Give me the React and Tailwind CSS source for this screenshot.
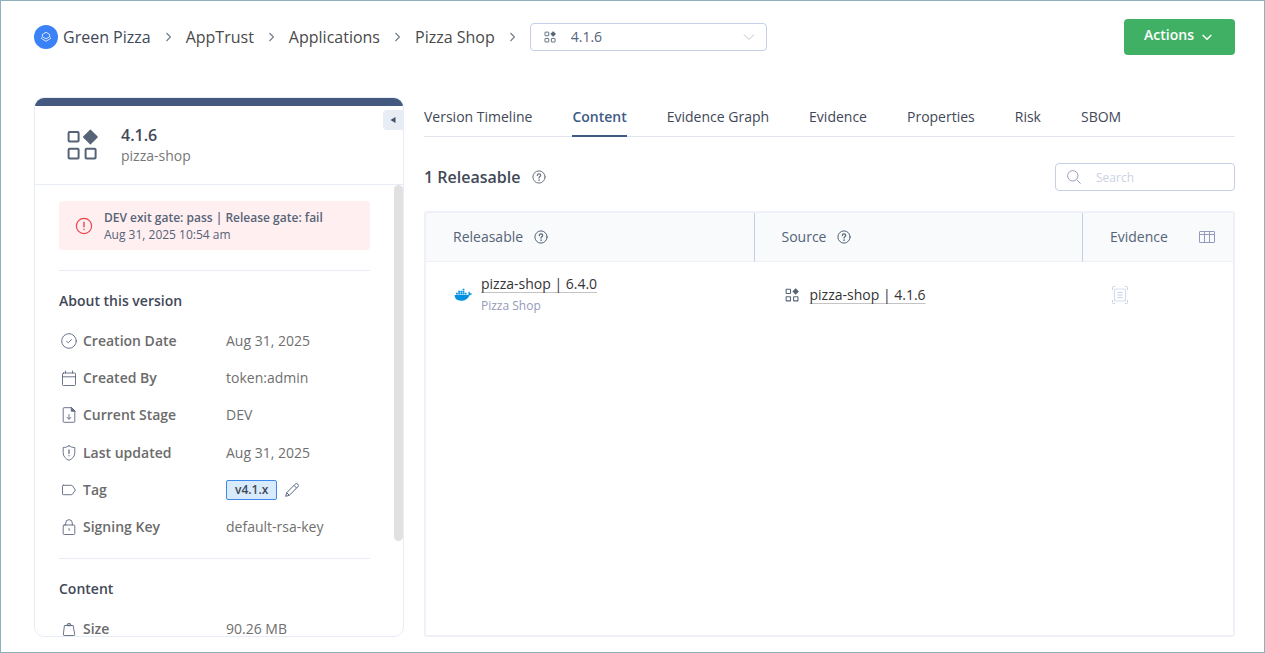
import React from "react";

function AppIcon({ className, stroke = 2 }) {
  return (
    <svg viewBox="0 0 32 32" className={className} fill="none" stroke="currentColor" strokeWidth={stroke} aria-hidden="true">
      <rect x="2.600" y="3" width="10" height="9.600" rx="1" />
      <rect x="2.600" y="19.800" width="10" height="9.600" rx="1" />
      <rect x="19.600" y="19.800" width="10" height="9.600" rx="1" />
      <path d="M24.400 1.200 31.200 8l-6.800 6.800L17.600 8z" fill="currentColor" strokeWidth="1.200" strokeLinejoin="round" />
    </svg>
  );
}

function Chevron() {
  return (
    <svg viewBox="0 0 5 10" className="h-[10px] w-[5px] shrink-0 text-[#707a8a]" fill="none" stroke="currentColor" strokeWidth="1.1" aria-hidden="true">
      <path d="M0.500 1 4.400 5 0.500 9" />
    </svg>
  );
}

function HelpIcon({ className }) {
  return (
    <svg viewBox="0 0 14 14" className={className} fill="none" stroke="currentColor" strokeWidth="1" strokeLinecap="round" aria-hidden="true">
      <circle cx="7" cy="7" r="6.100" />
      <path d="M5.300 5.600C5.300 4.500 6 3.900 7 3.900s1.700.6 1.700 1.500C8.700 6.500 7 6.700 7 8.100" strokeWidth="1.200" />
      <circle cx="7" cy="10.100" r="0.300" fill="currentColor" strokeWidth="0.800" />
    </svg>
  );
}

function RowIcon({ children }) {
  return (
    <svg viewBox="0 0 16 16" className="size-4 shrink-0 text-[#5b6780]" fill="none" stroke="currentColor" strokeWidth="0.900" strokeLinecap="round" strokeLinejoin="round" aria-hidden="true">
      {children}
    </svg>
  );
}

const icons = {
  check: (
    <RowIcon>
      <circle cx="8" cy="8" r="7.300" />
      <path d="m5.600 8.300 1.700 1.500 3.200-3.300" />
    </RowIcon>
  ),
  calendar: (
    <RowIcon>
      <rect x="1.500" y="3" width="13" height="12.500" rx="1" />
      <path d="M1.500 6.800h13M4.500 1v2M11.500 1v2" />
    </RowIcon>
  ),
  stage: (
    <RowIcon>
      <path d="M10.300.700H3a.8.8 0 0 0-.8.8v13a.8.8 0 0 0 .8.800h10a.8.8 0 0 0 .8-.8V4.200z" />
      <path d="M10.300.700v3.500h3.500z" fill="currentColor" />
      <path d="M8 7.500v4.500M6 10.300l2 2 2-2" />
    </RowIcon>
  ),
  shield: (
    <RowIcon>
      <path d="M8 .800c1.600 1.200 3.500 1.700 5.800 1.700v5c0 3.800-2.200 6.300-5.800 7.800-3.600-1.500-5.800-4-5.800-7.800v-5C4.500 2.500 6.400 2 8 .800z" />
      <path d="M8 4.800v3.700M8 10.600v.2" strokeWidth="1.200" />
    </RowIcon>
  ),
  tag: (
    <RowIcon>
      <path d="M2.300 3.300h8.300a1 1 0 0 1 .8.400L14.400 8l-3 4.300a1 1 0 0 1-.8.400H2.300a.8.8 0 0 1-.8-.8V4.100a.8.8 0 0 1 .8-.8z" />
    </RowIcon>
  ),
  lock: (
    <RowIcon>
      <rect x="2.200" y="6" width="11.600" height="9.500" rx="1" />
      <path d="M4.700 6V4a3.300 3.300 0 0 1 6.600 0v2M7.700 9.300l.5.500v1.600" />
    </RowIcon>
  ),
  weight: (
    <RowIcon>
      <path d="M3.800 4.500h8.400l1.500 8.900a.9.9 0 0 1-.9 1.100H3.200a.9.900 0 0 1-.9-1.100z" />
      <path d="M6 4.300a2 2 0 0 1 4 0z" fill="currentColor" fillOpacity="0.4" />
    </RowIcon>
  ),
};

function InfoRow({ icon, label, children }) {
  return (
    <div className="flex items-center">
      <dt className="flex w-[167px] shrink-0 items-center gap-1.5 pl-0.5 font-semibold text-[#6b6b6b]">
        {icons[icon]}
        {label}
      </dt>
      <dd className="flex items-center gap-2 text-[#6f6f6f]">{children}</dd>
    </div>
  );
}

const tabs = ["Version Timeline", "Content", "Evidence Graph", "Evidence", "Properties", "Risk", "SBOM"];
const crumbs = ["AppTrust", "Applications", "Pizza Shop"];

function Sidebar() {
  return (
    <aside className="relative flex w-[370px] shrink-0 flex-col overflow-hidden rounded-[10px] border border-[#e8edf5]">
      <div className="h-2 shrink-0 bg-[#43597f]" />
      <button aria-label="Collapse panel" className="absolute top-3 right-0 flex h-5 w-5 items-center justify-center rounded-l bg-[#e8edf5] text-[#43536b]">
        <svg viewBox="0 0 6 8" className="h-2 w-1.5" fill="currentColor" aria-hidden="true">
          <path d="M5.500 1v6L.500 4z" />
        </svg>
      </button>
      <div className="flex h-[79px] shrink-0 items-center gap-[23px] border-b border-[#e8edf5] pl-[31px]">
        <AppIcon className="size-8 text-[#556377]" />
        <div className="pt-0.5">
          <h1 className="text-base leading-5 font-semibold text-[#414857]">4.1.6</h1>
          <p className="leading-[22px] text-[#777777]">pizza-shop</p>
        </div>
      </div>
      <div className="min-h-0 flex-1 overflow-hidden pt-4 pr-[33px] pl-6">
        <div className="flex h-[49px] items-center gap-[11px] rounded bg-[#ffeff0] pl-4 text-[#556377]">
          <svg viewBox="0 0 18 18" className="size-[18px] shrink-0 text-[#ee4349]" fill="none" stroke="currentColor" strokeWidth="1.200" strokeLinecap="round" aria-hidden="true">
            <circle cx="9" cy="9" r="7.600" />
            <path d="M9 5.200v4.600M9 12.300v.2" strokeWidth="1.400" />
          </svg>
          <div className="text-xs leading-[17px]">
            <p className="font-semibold">DEV exit gate: pass | Release gate: fail</p>
            <p>Aug 31, 2025 10:54 am</p>
          </div>
        </div>
        <section className="mt-5 border-t border-[#e8edf5] pt-5 pb-3">
          <h2 className="mb-[11px] leading-5 font-semibold text-[#414857]">About this version</h2>
          <dl className="grid h-56 grid-rows-6">
            <InfoRow icon="check" label="Creation Date">Aug 31, 2025</InfoRow>
            <InfoRow icon="calendar" label="Created By">token:admin</InfoRow>
            <InfoRow icon="stage" label="Current Stage">DEV</InfoRow>
            <InfoRow icon="shield" label="Last updated">Aug 31, 2025</InfoRow>
            <InfoRow icon="tag" label="Tag">
              <span className="rounded-xs border border-[#3e8ae8] bg-[#d8ebfd] px-2 text-xs leading-[18px] font-semibold text-[#414857]">v4.1.x</span>
              <button aria-label="Edit tag" className="text-[#5b6780]">
                <svg viewBox="0 0 14 14" className="size-[14px]" fill="none" stroke="currentColor" strokeWidth="1" strokeLinejoin="round" aria-hidden="true">
                  <path d="M.700 13.300 1.700 9.700 10.200 1.200a1.500 1.500 0 0 1 2.600 2.600L4.300 12.300zM9 2.400 11.600 5M1.700 9.700l2.600 2.600" />
                </svg>
              </button>
            </InfoRow>
            <InfoRow icon="lock" label="Signing Key">default-rsa-key</InfoRow>
          </dl>
        </section>
        <section className="border-t border-[#e8edf5] pt-5">
          <h2 className="mb-[11px] leading-5 font-semibold text-[#414857]">Content</h2>
          <dl className="grid h-[37px]">
            <InfoRow icon="weight" label="Size">90.26 MB</InfoRow>
          </dl>
        </section>
      </div>
      <div className="absolute top-[87px] right-0 h-[356px] w-[9px] rounded-full bg-[#e1e1e1]" />
    </aside>
  );
}

function ContentTable() {
  return (
    <div className="mt-5 flex-1 rounded-[3px] border-2 border-[#f0f1f8]">
      <table className="w-full table-fixed border-separate border-spacing-0 text-left">
        <colgroup>
          <col />
          <col />
          <col className="w-[150px]" />
        </colgroup>
        <thead className="bg-[#f8fafc] text-[#556377]">
          <tr className="h-[49px]">
            <th className="border-r border-b border-r-[#c5cfe8] border-b-[#f0f1f8] pl-[27px] font-normal">
              <span className="flex items-center gap-[11px]">Releasable <HelpIcon className="size-[14px]" /></span>
            </th>
            <th className="border-r border-b border-r-[#c5cfe8] border-b-[#f0f1f8] pl-[27px] font-normal">
              <span className="flex items-center gap-[11px]">Source <HelpIcon className="size-[14px]" /></span>
            </th>
            <th className="border-b border-[#f0f1f8] pr-[18px] pl-[27px] font-normal">
              <span className="flex items-center justify-between">
                Evidence
                <button aria-label="Choose columns" className="text-[#9599bb]">
                  <svg viewBox="0 0 16 12" className="h-3 w-4" fill="none" stroke="currentColor" aria-hidden="true">
                    <rect x="0.500" y="0.500" width="15" height="11" rx="0.500" />
                    <path d="M.5 3.500h15M5.500.500v11M10.500.500v11" />
                  </svg>
                </button>
              </span>
            </th>
          </tr>
        </thead>
        <tbody>
          <tr className="h-[66px]">
            <td className="pl-7">
              <div className="flex items-center gap-[9px]">
                <svg viewBox="0 0 18 14" className="h-[14px] w-[18px] shrink-0" fill="#0091e2" aria-hidden="true">
                  <path d="M.700 7h12.600c.7 0 1.200-.2 1.500-.5-.6-1-.5-2.200.1-3 .9.500 1.300 1.200 1.400 2 .6-.1 1.200 0 1.700.3-.4 1-1.300 1.400-2.500 1.400-1.500 3.600-4.300 5.500-8.200 5.500C3.400 12.700.500 10.800.700 7z" />
                  <path d="M2 4.800h1.800v1.700H2zM4.200 4.800H6v1.700H4.200zM6.400 4.800h1.800v1.700H6.400zM8.600 4.800h1.800v1.700H8.600zM10.800 4.800h1.800v1.700h-1.800zM4.200 2.700H6v1.700H4.200zM6.400 2.700h1.800v1.700H6.400zM8.600 2.700h1.800v1.700H8.600zM8.600.700h1.800v1.600H8.600z" />
                </svg>
                <div>
                  <a href="#releasable" className="block leading-[22px] text-[#333333] underline decoration-[#c4c4c4] decoration-1 underline-offset-3">pizza-shop | 6.4.0</a>
                  <p className="text-xs leading-[22px] text-[#9599bb]">Pizza Shop</p>
                </div>
              </div>
            </td>
            <td className="pl-[30px]">
              <div className="flex items-center gap-[11px]">
                <AppIcon className="size-[14px] shrink-0 text-[#556377]" stroke={2.4} />
                <a href="#source" className="text-[#333333] underline decoration-[#c4c4c4] decoration-1 underline-offset-3">pizza-shop | 4.1.6</a>
              </div>
            </td>
            <td className="pl-7">
              <svg viewBox="0 0 18 18" className="size-[18px] text-[#c9cfe6]" fill="none" stroke="currentColor" aria-label="No evidence" role="img">
                <path d="M1.500 4V1.500a1 1 0 0 1 1-1H4M14 .500h1.500a1 1 0 0 1 1 1V4M16.500 14v2.500a1 1 0 0 1-1 1H14M4 17.500H2.500a1 1 0 0 1-1-1V14" />
                <rect x="3.500" y="3" width="11" height="12" rx="1" strokeWidth="1.200" stroke="#d8dded" />
                <path d="M6.500 6.500h5M6.500 9h5M6.500 11.500h5" />
              </svg>
            </td>
          </tr>
        </tbody>
      </table>
    </div>
  );
}

export default function App() {
  return (
    <div className="flex h-screen flex-col border border-[#8fb1bd] bg-white pt-[18px] pr-[29px] pb-[15px] pl-[33px] font-['Open_Sans','Noto_Sans',sans-serif] text-sm">
      <header className="flex h-9 shrink-0 items-center justify-between">
        <nav aria-label="Breadcrumb" className="flex items-center gap-[15px] text-base text-[#4a4a4a]">
          <a href="#project" className="flex items-center gap-[5px] text-[#414857]">
            <span className="flex size-6 items-center justify-center rounded-full bg-[#3b82f6]">
              <svg viewBox="0 0 12 12" className="size-3 text-white" fill="none" stroke="currentColor" strokeWidth="0.800" strokeLinejoin="round" aria-hidden="true">
                <path d="M6 1.300 9.600 3.400v2.400L6 7.900 2.400 5.800V3.400zM1.500 6.500v1L6 10.300l4.500-2.800v-1" />
              </svg>
            </span>
            Green Pizza
          </a>
          {crumbs.map((c) => (
            <React.Fragment key={c}>
              <Chevron />
              <a href="#crumb">{c}</a>
            </React.Fragment>
          ))}
          <Chevron />
          <div className="relative flex items-center text-[#556377]">
            <AppIcon className="pointer-events-none absolute left-[14px] size-3" stroke={2.400} />
            <select aria-label="Version" className="h-7 w-[237px] appearance-none rounded border border-[#c5cfe8] bg-transparent pl-10 text-sm">
              <option>4.1.6</option>
            </select>
            <svg viewBox="0 0 12 8" className="pointer-events-none absolute right-3 h-2 w-3 text-[#c0c4cc]" fill="none" stroke="currentColor" aria-hidden="true">
              <path d="m1 1.500 5 5 5-5" />
            </svg>
          </div>
        </nav>
        <button className="flex h-9 items-center gap-2 rounded bg-[#40b065] pr-[23px] pb-1 pl-5 font-semibold text-white">
          Actions
          <svg viewBox="0 0 10 7" className="mt-1 h-[7px] w-[10px]" fill="none" stroke="currentColor" strokeWidth="1.500" aria-hidden="true">
            <path d="m.700 1 4.300 4.300L9.300 1" />
          </svg>
        </button>
      </header>
      <div className="mt-[42px] flex min-h-0 flex-1 gap-5">
        <Sidebar />
        <main className="flex min-w-0 flex-1 flex-col">
          <div role="tablist" className="flex h-10 shrink-0 items-stretch gap-10 border-b border-[#e2e4ed] text-[#414857]">
            {tabs.map((t) =>
              t === "Content" ? (
                <button key={t} role="tab" aria-selected="true" className="-mb-px border-b-2 border-[#405a84] pt-px font-semibold text-[#405a84]">{t}</button>
              ) : (
                <button key={t} role="tab" aria-selected="false">{t}</button>
              )
            )}
          </div>
          <div className="mt-[26px] flex h-7 shrink-0 items-center justify-between">
            <h2 className="flex items-center gap-3 text-base font-semibold text-[#414857]">
              1 Releasable
              <HelpIcon className="size-[14px] text-[#6b7280]" />
            </h2>
            <label className="relative flex items-center">
              <svg viewBox="0 0 14 14" className="pointer-events-none absolute left-3 size-[14px] text-[#9aa0bd]" fill="none" stroke="currentColor" aria-hidden="true">
                <circle cx="5.800" cy="5.800" r="5.200" />
                <path d="m9.600 9.600 4 4" />
              </svg>
              <input type="text" aria-label="Search" placeholder="Search" className="h-7 w-[180px] rounded border border-[#c5cfe8] pr-3 pl-10 text-xs placeholder:text-[#ccd1e4]" />
            </label>
          </div>
          <ContentTable />
        </main>
      </div>
    </div>
  );
}
